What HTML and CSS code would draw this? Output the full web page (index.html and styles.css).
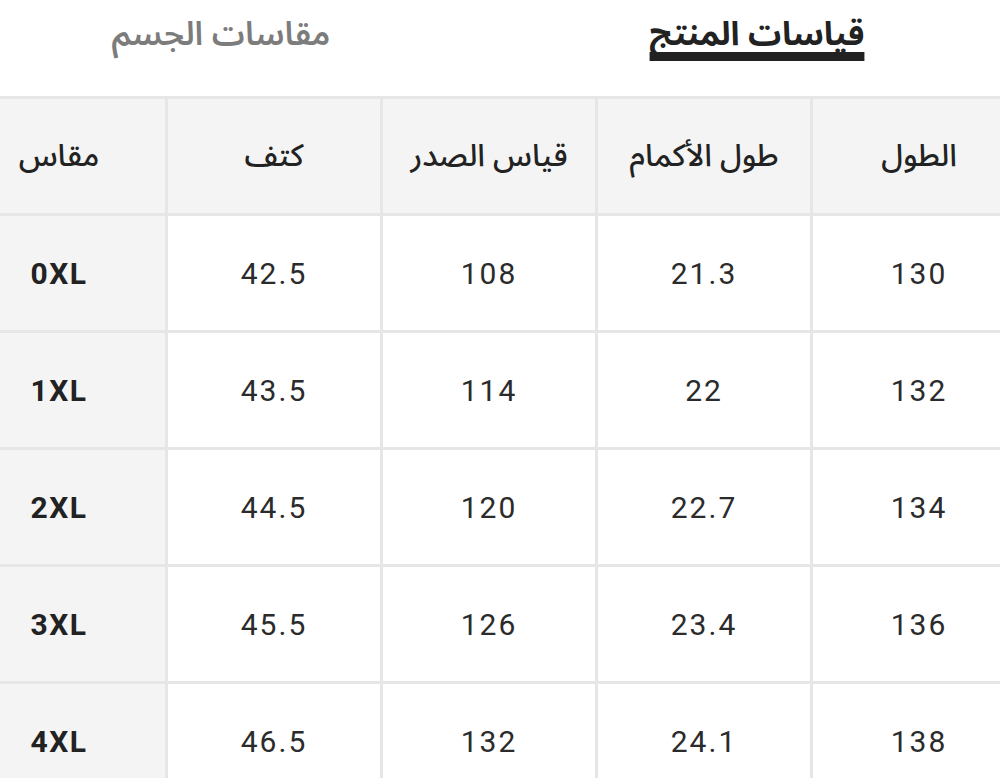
FILE: index.html
```html
<!DOCTYPE html>
<html lang="ar">
<head>
<meta charset="utf-8">
<link rel="stylesheet" href="styles.css">
</head>
<body>
<div class="tabs" dir="rtl">
  <div class="tab"><span class="tab-label active">قياسات المنتج</span></div>
  <div class="tab"><span class="tab-label">مقاسات الجسم</span></div>
</div>
<div class="page">
  <div class="grid" dir="rtl">
    <div class="cell head">الطول</div>
    <div class="cell head">طول الأكمام</div>
    <div class="cell head">قياس الصدر</div>
    <div class="cell head">كتف</div>
    <div class="cell head">مقاس</div>

    <div class="cell num">130</div>
    <div class="cell num">21.3</div>
    <div class="cell num">108</div>
    <div class="cell num">42.5</div>
    <div class="cell size">0XL</div>

    <div class="cell num">132</div>
    <div class="cell num">22</div>
    <div class="cell num">114</div>
    <div class="cell num">43.5</div>
    <div class="cell size">1XL</div>

    <div class="cell num">134</div>
    <div class="cell num">22.7</div>
    <div class="cell num">120</div>
    <div class="cell num">44.5</div>
    <div class="cell size">2XL</div>

    <div class="cell num">136</div>
    <div class="cell num">23.4</div>
    <div class="cell num">126</div>
    <div class="cell num">45.5</div>
    <div class="cell size">3XL</div>

    <div class="cell num">138</div>
    <div class="cell num">24.1</div>
    <div class="cell num">132</div>
    <div class="cell num">46.5</div>
    <div class="cell size">4XL</div>
  </div>
</div>
</body>
</html>
```

FILE: styles.css
```css
html, body {
  margin: 0;
  padding: 0;
  background: #ffffff;
  overflow: hidden;
}

body {
  width: 1000px;
  height: 778px;
  font-family: "Noto Sans Arabic", "DejaVu Sans", Roboto, sans-serif;
  color: #222222;
}

.tabs {
  display: grid;
  grid-template-columns: 486px 442px;
  column-gap: 72px;
  height: 96px;
  width: 1000px;
}

.tab {
  display: flex;
  justify-content: center;
  align-items: center;
  padding-bottom: 33px;
}

.tab-label {
  font-size: 33px;
  line-height: normal;
  color: #7c7c7c;
  font-weight: 600;
  letter-spacing: 0.5px;
}

.tab-label.active {
  color: #222222;
  font-weight: bold;
  text-decoration: underline;
  text-decoration-color: #222222;
  text-decoration-thickness: 9px;
  text-underline-offset: 7px;
  text-decoration-skip-ink: none;
}

.page {
  width: 1072px;
  margin-left: -47px;
}

.grid {
  display: grid;
  grid-template-columns: repeat(5, 212px);
  grid-auto-rows: 114px;
  gap: 3px;
  padding-top: 3px;
  background: #e6e6e6;
}

.cell {
  display: flex;
  align-items: center;
  justify-content: center;
  background: #ffffff;
}

.head {
  background: #f4f4f4;
  font-size: 31px;
  font-weight: 500;
  color: #222222;
}

.num {
  font-family: Roboto, "Liberation Sans", sans-serif;
  font-size: 30px;
  letter-spacing: 2px;
  color: #2b2b2b;
  direction: ltr;
}

.size {
  background: #f4f4f4;
  font-family: Roboto, "Liberation Sans", sans-serif;
  font-weight: bold;
  font-size: 30px;
  letter-spacing: 1.5px;
  color: #222222;
  direction: ltr;
}
```
